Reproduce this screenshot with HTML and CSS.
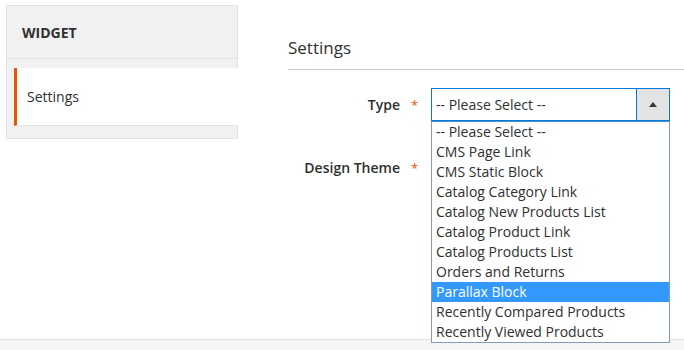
FILE: index.html
```html
<!DOCTYPE html>
<html>
<head>
<meta charset="utf-8">
<link rel="stylesheet" href="styles.css">
</head>
<body>
<div class="page">
  <aside class="nav">
    <div class="nav-title">WIDGET</div>
    <div class="nav-items">
      <div class="nav-item">Settings</div>
    </div>
  </aside>
  <main class="main">
    <div class="section-title">Settings</div>
    <div class="field">
      <label class="label">Type</label>
      <span class="req">*</span>
      <div class="control">
        <div class="select focused">
          <span class="select-text">-- Please Select --</span>
          <span class="select-btn"><span class="tri"></span></span>
        </div>
        <ul class="listbox">
          <li>-- Please Select --</li>
          <li>CMS Page Link</li>
          <li>CMS Static Block</li>
          <li>Catalog Category Link</li>
          <li>Catalog New Products List</li>
          <li>Catalog Product Link</li>
          <li>Catalog Products List</li>
          <li>Orders and Returns</li>
          <li class="selected">Parallax Block</li>
          <li>Recently Compared Products</li>
          <li>Recently Viewed Products</li>
        </ul>
      </div>
    </div>
    <div class="field field-2">
      <label class="label">Design Theme</label>
      <span class="req">*</span>
      <div class="control"></div>
    </div>
  </main>
</div>
<footer class="footer"></footer>
</body>
</html>
```

FILE: styles.css
```css
* { box-sizing: border-box; }
html, body { margin: 0; padding: 0; background: #fff; }
body {
  font-family: "Open Sans", "DejaVu Sans", sans-serif;
  font-size: 14px;
  color: #303030;
  width: 684px;
  height: 350px;
  overflow: hidden;
}
.page {
  display: flex;
  align-items: flex-start;
  height: 339px;
  padding: 5px 0 0 6px;
}
.nav {
  width: 232px;
  flex: none;
  background: #f1f1f1;
  border: 1px solid #e3e3e3;
}
.nav-title {
  height: 53px;
  display: flex;
  align-items: center;
  padding-left: 15px;
  font-weight: 700;
  font-size: 14px;
  color: #303030;
  border-bottom: 1px solid #e3e3e3;
}
.nav-items {
  padding: 9px 0 12px 7px;
}
.nav-item {
  height: 58px;
  margin-right: -1px;
  background: #fff;
  border-left: 3px solid #eb5202;
  border-bottom: 1px solid #e3e3e3;
  display: flex;
  align-items: center;
  padding-left: 10px;
  color: #303030;
}
.main {
  flex: 1;
  margin-left: 50px;
  padding-top: 31px;
}
.section-title {
  font-size: 17px;
  line-height: 23px;
  font-weight: 400;
  color: #303030;
  padding-bottom: 10px;
  border-bottom: 1px solid #cdcac5;
}
.field {
  display: flex;
  align-items: center;
  height: 33px;
  margin-top: 18px;
}
.field-2 { margin-top: 30px; }
.label {
  width: 112px;
  text-align: right;
  font-weight: 600;
  color: #303030;
}
.req {
  width: 31px;
  padding-left: 11px;
  color: #eb5202;
  font-size: 13px;
}
.control {
  position: relative;
  width: 239px;
  height: 33px;
}
.select {
  display: flex;
  height: 33px;
  border: 1px solid #adadad;
  background: #fff;
}
.select.focused { border-color: #007bdb; }
.select-text {
  flex: 1;
  line-height: 31px;
  padding-left: 4px;
  color: #303030;
}
.select-btn {
  width: 33px;
  background: #e3e3e3;
  border-left: 1px solid #adadad;
  display: flex;
  align-items: center;
  justify-content: center;
}
.focused .select-btn { border-left-color: #007bdb; }
.tri {
  width: 0;
  height: 0;
  border-left: 4px solid transparent;
  border-right: 4px solid transparent;
  border-bottom: 5px solid #41362f;
}
.listbox {
  position: absolute;
  left: 0;
  top: 33px;
  width: 239px;
  margin: 0;
  padding: 0;
  list-style: none;
  background: #fff;
  border: 1px solid #7f9cc0;
  border-top-color: #4d8fd0;
  z-index: 5;
}
.listbox li {
  height: 20px;
  line-height: 20px;
  padding-left: 4px;
  color: #303030;
  white-space: nowrap;
}
.listbox li.selected {
  background: #3399ff;
  color: #fff;
}
.footer {
  height: 11px;
  background: #f5f5f5;
  border-top: 1px solid #e3e3e3;
}
```
